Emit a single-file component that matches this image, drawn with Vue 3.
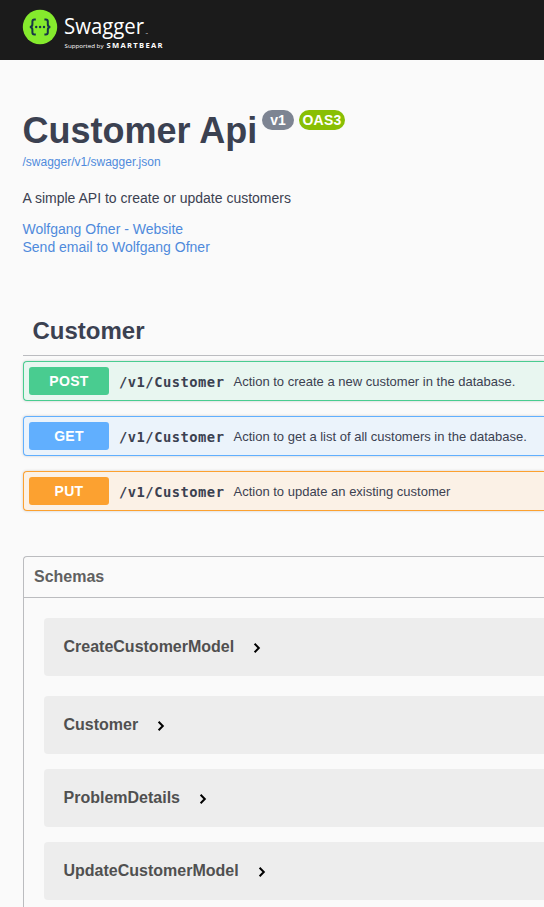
<script setup>
const operations = [
  { method: 'POST', path: '/v1/Customer', summary: 'Action to create a new customer in the database.' },
  { method: 'GET', path: '/v1/Customer', summary: 'Action to get a list of all customers in the database.' },
  { method: 'PUT', path: '/v1/Customer', summary: 'Action to update an existing customer' },
]
const models = ['CreateCustomerModel', 'Customer', 'ProblemDetails', 'UpdateCustomerModel']
</script>

<template>
  <div class="page">
    <header class="topbar">
      <svg class="logo" width="150" height="44" viewBox="0 0 150 44">
        <circle cx="17" cy="17" r="17.2" fill="#85ea2d" />
        <g fill="none" stroke="#173647" stroke-width="2">
          <path d="M12.8 9.4h-1.4q-2 0-2 2v2.8q0 2.8-2.6 2.8 2.6 0 2.6 2.8v2.8q0 2 2 2h1.4" />
          <path d="M21.4 9.4h1.4q2 0 2 2v2.8q0 2.8 2.6 2.8-2.6 0-2.6 2.8v2.8q0 2-2 2h-1.4" />
        </g>
        <g fill="#173647">
          <circle cx="13.2" cy="17" r="1.2" />
          <circle cx="17.1" cy="17" r="1.2" />
          <circle cx="21" cy="17" r="1.2" />
        </g>
        <text class="brand" x="41" y="24" textLength="80" lengthAdjust="spacingAndGlyphs">Swagger</text>
        <text class="tm" x="122.5" y="24.5">™</text>
        <text class="by" x="41.5" y="38" textLength="39" lengthAdjust="spacingAndGlyphs">Supported by</text>
        <text class="bear" x="83.5" y="38" textLength="56" lengthAdjust="spacing">SMARTBEAR</text>
      </svg>
    </header>

    <section class="info">
      <h1 class="title">
        <span class="name">Customer Api</span>
        <span class="badge version">v1</span>
        <span class="badge oas">OAS3</span>
      </h1>
      <a class="spec">/swagger/v1/swagger.json</a>
      <p class="description">A simple API to create or update customers</p>
      <a class="contact">Wolfgang Ofner - Website</a>
      <a class="contact">Send email to Wolfgang Ofner</a>
    </section>

    <section class="operations">
      <h2 class="tag">Customer</h2>
      <div v-for="op in operations" :key="op.method" class="op" :class="op.method.toLowerCase()">
        <span class="method">{{ op.method }}</span>
        <span class="path">{{ op.path }}</span>
        <span class="summary">{{ op.summary }}</span>
      </div>
    </section>

    <section class="schemas">
      <h3 class="schemas-title">Schemas</h3>
      <div class="models">
        <div v-for="model in models" :key="model" class="model">
          <span>{{ model }}</span>
          <svg class="chevron" width="8" height="12" viewBox="0 0 8 12">
            <path d="M1.6 1.8 5.8 6 1.6 10.2" fill="none" stroke="#000" stroke-width="2" />
          </svg>
        </div>
      </div>
    </section>
  </div>
</template>

<style>
body {
  margin: 0;
  background: #fafafa;
}
</style>

<style scoped>
.page {
  box-sizing: border-box;
  height: 907px;
  overflow: hidden;
  background: #fafafa;
  color: #3b4151;
  font-family: "Liberation Sans", Arial, sans-serif;
}
.topbar {
  box-sizing: border-box;
  height: 60px;
  padding: 10px 0 0 23px;
  background: #1b1b1b;
}
.logo {
  display: block;
  overflow: visible;
}
.brand {
  fill: #fff;
  font: 400 22px "Open Sans", sans-serif;
}
.tm {
  fill: #fff;
  font: 400 3px "Open Sans", sans-serif;
}
.by {
  fill: #fff;
  font: 400 6px "Open Sans", sans-serif;
}
.bear {
  fill: #fff;
  font: 700 7.6px "Open Sans", sans-serif;
}
.info {
  display: flex;
  flex-direction: column;
  padding: 50px 0 0 22.5px;
}
.title {
  display: flex;
  align-items: flex-start;
  height: 44px;
  margin: 0;
  font-size: 36px;
  font-weight: 700;
  line-height: 41px;
}
.name {
  width: 234.5px;
  white-space: nowrap;
}
.badge {
  box-sizing: border-box;
  height: 20px;
  border-radius: 10px;
  color: #fff;
  font-size: 14px;
  line-height: 20px;
  text-align: center;
}
.version {
  width: 32px;
  margin-left: 5px;
  background: #7d8492;
}
.oas {
  width: 46px;
  margin-left: 5px;
  background: #89bf04;
  letter-spacing: 0.2px;
}
.spec {
  color: #4f8adc;
  font-size: 12px;
  line-height: 16px;
}
.description {
  margin: 20px 0 14px;
  font-size: 14px;
  line-height: 16px;
}
.contact {
  color: #4f8adc;
  font-size: 14px;
  line-height: 18px;
}
.operations {
  display: flex;
  flex-direction: column;
  gap: 15px;
  padding: 49px 0 0 23px;
}
.tag {
  height: 50px;
  margin: 0 0 -10px;
  padding-left: 9.5px;
  border-bottom: 1px solid #bbbcc0;
  font-size: 24px;
  line-height: 51px;
}
.op {
  box-sizing: border-box;
  display: flex;
  align-items: center;
  height: 40px;
  padding-left: 5px;
  border: 1px solid;
  border-right: 0;
  border-radius: 4px 0 0 4px;
  box-shadow: 0 0 3px rgba(0, 0, 0, 0.19);
  white-space: nowrap;
}
.post {
  border-color: #49cc90;
  background: #e8f6f0;
}
.get {
  border-color: #61affe;
  background: #ebf3fb;
}
.put {
  border-color: #fca130;
  background: #fbf1e6;
}
.method {
  width: 80px;
  height: 28px;
  border-radius: 3px;
  color: #fff;
  font-size: 14px;
  font-weight: 700;
  letter-spacing: 0.3px;
  line-height: 28px;
  text-align: center;
}
.post .method {
  background: #49cc90;
}
.get .method {
  background: #61affe;
}
.put .method {
  background: #fca130;
}
.path {
  width: 105px;
  padding: 1px 10px 0;
  font: 700 13.8px/18px "DejaVu Sans Mono", monospace;
  letter-spacing: 0.48px;
}
.summary {
  margin-left: -0.5px;
  font-size: 13px;
}
.schemas {
  height: 400px;
  margin: 45px 0 0 23px;
  border: 1px solid #bbbcbf;
  border-right: 0;
  border-radius: 4px 0 0 0;
}
.schemas-title {
  height: 40px;
  margin: 0;
  padding-left: 10px;
  border-bottom: 1px solid #bbbcbf;
  color: #606060;
  font-size: 16px;
  line-height: 39px;
}
.models {
  display: flex;
  flex-direction: column;
  gap: 15px;
  padding: 20px 0 0 20px;
}
.model {
  box-sizing: border-box;
  display: flex;
  align-items: center;
  height: 58px;
  padding: 0 0 1px 19.5px;
  border-radius: 4px 0 0 4px;
  background: #ededed;
  color: #505050;
  font-size: 16px;
  font-weight: 700;
}
.model:first-child {
  margin-bottom: 5px;
}
.chevron {
  margin: 3px 0 0 19px;
}
</style>
